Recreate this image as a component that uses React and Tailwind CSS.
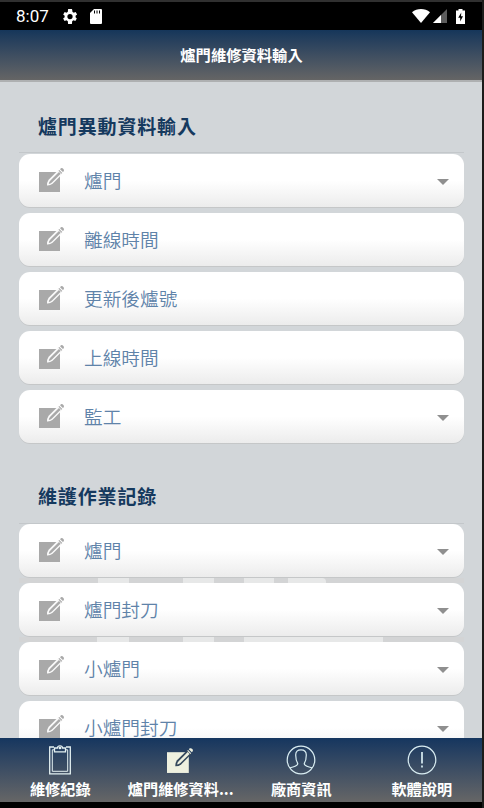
import React from "react";

// Form sections, "select" rows show the dropdown arrow
const UPDATE_FIELDS = [
  { label: "爐門", select: true },
  { label: "離線時間" },
  { label: "更新後爐號" },
  { label: "上線時間" },
  { label: "監工", select: true },
];

const MAINTENANCE_FIELDS = [
  { label: "爐門", select: true },
  { label: "爐門封刀", select: true },
  { label: "小爐門", select: true },
  { label: "小爐門封刀", select: true },
];

// --- Icons ---
const EditIcon = ({ className, cut }) => (
  <svg viewBox="0 0 26 26" className={className} fill="none">
    <path d="M0 5H21V25H0Z" fill="currentColor" />
    {/* pencil: cut outline over the square, solid tip above it */}
    <path d="M19.6 2.8 9.6 12.8Q7.8 15.5 8 18.6Q11.2 18.8 13.6 16.8L23.4 7Z" fill={cut} />
    <path d="M20 4.9 11.2 13.7Q9.8 15.2 9.8 16.9Q11.6 16.8 12.9 15.5L21.7 6.7Z" fill="currentColor" />
    <path d="M20.3 2.9 19.5 3.7L22.5 6.7 23.3 5.9Z" fill="currentColor" />
    <path d="M21.9 1.3 21 2.2L23.9 5.1 24.8 4.2Q25.4 2.9 24.4 1.9Q23.2.7 21.9 1.3Z" fill="currentColor" />
  </svg>
);

const ClipboardIcon = () => (
  <svg viewBox="0 0 24 30" className="h-[30px] w-6" fill="none" stroke="#e4f1f2" strokeWidth="1.3">
    <path d="M6 2H1.7V28.8H22.3V2H18" />
    <path d="M6 4.8H4.3V26.3H19.7V4.8H18" strokeWidth="1" />
    <path d="M6.5 6.8V3H9.5C9.6.2 14.4.2 14.5 3H17.5V6.8Z" />
    <circle cx="12" cy="3" r=".7" />
  </svg>
);

const UserIcon = () => (
  <svg viewBox="0 0 30 30" className="h-[30px] w-[30px]" fill="none" stroke="#d9edf2" strokeWidth="1.2">
    <circle cx="15" cy="15" r="13.8" />
    <path d="M3.8 23C7 21.6 11.8 21.6 11.8 18.6C10.2 16.2 9.7 13.2 9.7 10C9.7 6.6 11.5 4.9 15 4.9S20.3 6.6 20.3 10C20.3 13.2 19.8 16.2 18.2 18.6C18.2 21.6 23 21.6 26.2 23" />
  </svg>
);

const AlertIcon = () => (
  <svg viewBox="0 0 30 30" className="h-[30px] w-[30px]" fill="none" stroke="#d9edf2" strokeWidth="1.2">
    <circle cx="15" cy="15" r="13.8" />
    <path d="M15 7V18.5M15 20.5V22.5" strokeWidth="1.7" />
  </svg>
);

const StatusBar = () => (
  <div className="flex h-[30px] items-center border-t-2 border-[#303030] bg-black px-4 text-white">
    <span className="w-[46px] pt-px font-[Roboto] text-[17px] leading-none">8:07</span>
    <svg viewBox="2 2 20 20" className="h-[15px] w-4" fill="white">
      <path d="M19.4 13a7.8 7.8 0 0 0 0-2l2.1-1.6-2-3.5-2.5 1a7.4 7.4 0 0 0-1.7-1L15 3.3 14.5 2h-5L9 5.9a7.4 7.4 0 0 0-1.7 1l-2.4-1-2 3.5L4.9 11a7.8 7.8 0 0 0 0 2l-2.1 1.6 2 3.5 2.5-1a7.4 7.4 0 0 0 1.7 1l.5 3.9h5l.5-3.9a7.4 7.4 0 0 0 1.7-1l2.4 1 2-3.5ZM12 15.5a3.5 3.5 0 1 1 0-7 3.5 3.5 0 0 1 0 7Z" />
    </svg>
    <svg viewBox="0 0 12 15" className="ml-3 h-[15px] w-3">
      <path d="M4 0h7a1 1 0 0 1 1 1v13a1 1 0 0 1-1 1H1a1 1 0 0 1-1-1V4Z" fill="white" />
      <path d="M4.5 1.5v3M7 1.5v3M9.5 1.5v3" stroke="black" strokeWidth="1" />
    </svg>
    <div className="mr-px ml-auto flex items-center">
      <svg viewBox="0 0 18 14" className="h-3.5 w-[18px]">
        <path d="M0 3.2C5-1 13-1 18 3.2L9 14Z" fill="white" />
      </svg>
      <svg viewBox="0 0 14 14" className="ml-[3px] h-3.5 w-3.5">
        <path d="M14 0V14H0Z" fill="#5c5c5c" />
        <path d="M8 6V14H0Z" fill="white" />
      </svg>
      <svg viewBox="0 0 9 15" className="ml-[9px] h-[15px] w-[9px]">
        <path d="M2.5 0h4v1.5H9V15H0V1.5h2.5Z" fill="white" />
        <path d="M5.3 3.6 2.2 8.7h2v3.8L7 7.3H5Z" fill="black" />
      </svg>
    </div>
  </div>
);

const FieldRow = ({ label, select }) => (
  <div className="flex h-[53px] shrink-0 items-center rounded-[11px] bg-linear-to-b from-white from-50% to-[#ececec] pr-[15px] pl-5 shadow-[0_1px_0_#c5c7c8]">
    <EditIcon className="mb-px h-[26px] w-[26px] text-[#a9a9a9]" cut="#fafafa" />
    <span className="mb-0.5 ml-[19px] text-[18.67px] font-[350] text-[#5f83a9]">{label}</span>
    {select && (
      <svg viewBox="0 0 12 6" className="mt-0.5 ml-auto h-1.5 w-3">
        <path d="M0 0h12L6 6Z" fill="#8f8f8f" />
      </svg>
    )}
  </div>
);

const SectionTitle = ({ children }) => (
  <h2 className="pl-[19px] text-[19px] leading-7 font-bold tracking-[0.85px] text-[#15395e]">{children}</h2>
);

// Parts of the faded background lettering that show between two rows
const GapTop = () => (
  <div className="flex h-full bg-[#d3d4d5] pl-[79px]">
    <div className="w-[31px] bg-[#e7e8e8]" />
    <div className="ml-[54px] w-[31px] bg-[#e7e8e8]" />
    <div className="ml-[30px] w-[30px] bg-[#e7e8e8]" />
    <div className="ml-[14px] w-[38px] rounded-tr bg-[#e7e8e8]" />
  </div>
);

const GapBottom = () => (
  <div className="flex h-full bg-[#d3d4d5] pl-[78px]">
    <div className="w-8 bg-[#e7e8e8]" />
    <div className="ml-[54px] w-[31px] bg-[#e7e8e8]" />
    <div className="ml-[30px] w-[139px] bg-[#e7e8e8]" />
  </div>
);

const Tab = ({ icon, label }) => (
  <div className="flex flex-1 flex-col items-center pt-[7px]">
    <div className="flex h-[30px] items-center">{icon}</div>
    <span className="mt-0.5 text-[15.2px] leading-[22px] font-bold whitespace-nowrap text-white">{label}</span>
  </div>
);

const App = () => {
  return (
    <div className="flex h-[808px] w-[484px] flex-col overflow-hidden border-r-2 border-[#1c1c1a] bg-black font-['Noto_Sans_CJK_TC','Noto_Sans',sans-serif]">
      <StatusBar />

      <header className="flex h-[52px] shrink-0 items-center justify-center border-b-2 border-[#aeb0b1] bg-linear-to-b from-[#15365a] to-[#656565] pb-0.5 pl-px">
        <h1 className="text-[15.3px] font-bold text-white">爐門維修資料輸入</h1>
      </header>

      <main className="h-[656px] shrink-0 overflow-hidden bg-[#d2d6d9] pr-[18px] pl-[19px]">
        <div className="flex h-[71px] items-center border-b border-[#c3c7ca] pt-[18px]">
          <SectionTitle>爐門異動資料輸入</SectionTitle>
        </div>
        <div className="flex flex-col gap-1.5 pt-px">
          {UPDATE_FIELDS.map((f) => (
            <FieldRow key={f.label} {...f} />
          ))}
        </div>

        <div className="flex h-[81px] items-center border-b border-[#c3c7ca] pt-[25px]">
          <SectionTitle>維護作業記錄</SectionTitle>
        </div>
        <div className="flex flex-col">
          {MAINTENANCE_FIELDS.map((f, i) => (
            <React.Fragment key={f.label}>
              {i > 0 && (
                <div className="h-1.5 pt-px">
                  {i === 1 && <GapTop />}
                  {i === 2 && <GapBottom />}
                </div>
              )}
              <FieldRow {...f} />
            </React.Fragment>
          ))}
        </div>
      </main>

      <nav className="flex h-16 shrink-0 bg-linear-to-b from-[#15365f] to-[#666666]">
        <Tab icon={<ClipboardIcon />} label="維修紀錄" />
        <Tab icon={<EditIcon className="h-[27px] w-[27px] text-[#eef0df]" cut="#34485c" />} label="爐門維修資料..." />
        <Tab icon={<UserIcon />} label="廠商資訊" />
        <Tab icon={<AlertIcon />} label="軟體說明" />
      </nav>
    </div>
  );
};

export default App;
